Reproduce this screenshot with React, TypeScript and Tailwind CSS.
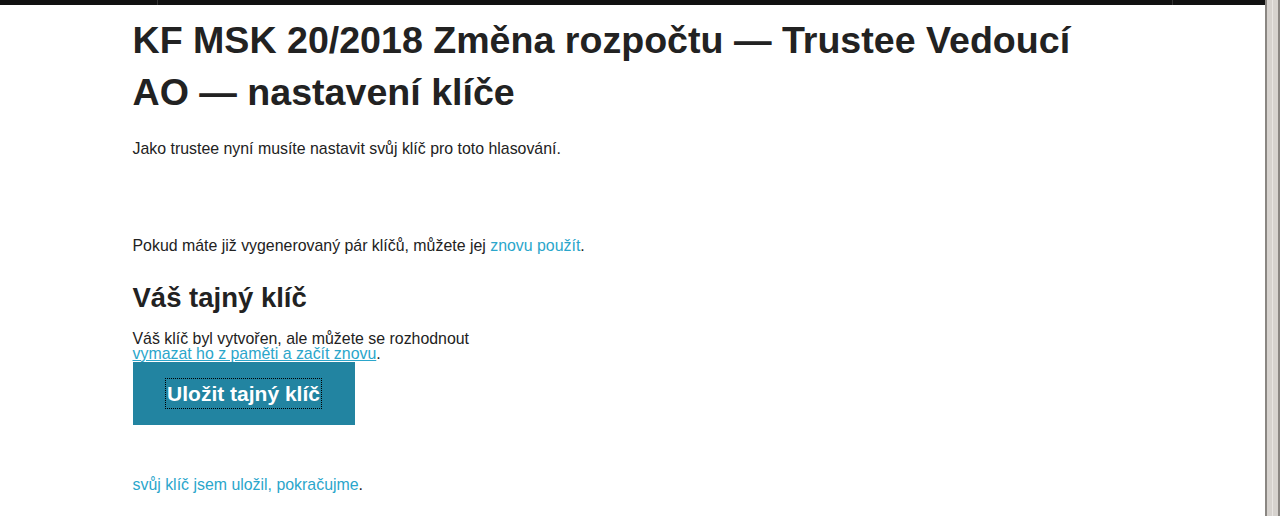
import React from "react";

export default function App() {
  return (
    <div className="flex h-[516px] w-full overflow-hidden bg-white font-['Liberation_Sans',Arial,sans-serif] text-[#222222]">
      <div className="flex min-w-0 flex-1 flex-col">
        <div className="flex h-[5px] w-full bg-[#111111]">
          <div className="w-[158px] border-r border-[#333333]" />
          <div className="w-[1015px] border-r border-[#333333]" />
          <div className="flex-1" />
        </div>
        <div className="mx-auto w-[1000px]">
          <h1 className="mt-[9px] w-[960px] text-[37.6px] font-bold leading-[52px] text-[#222222]">
            KF MSK 20/2018 Změna rozpočtu — Trustee Vedoucí AO — nastavení klíče
          </h1>
          <p className="mt-[19px] text-[15.9px] leading-[24px]">
            Jako trustee nyní musíte nastavit svůj klíč pro toto hlasování.
          </p>
          <p className="mt-[73px] text-[15.9px] leading-[24px]">
            Pokud máte již vygenerovaný pár klíčů, můžete jej{" "}
            <a href="#" className="text-[#2ba6cb]">znovu použít</a>.
          </p>
          <h2 className="mt-[21px] text-[27.5px] font-bold leading-[38px]">Váš tajný klíč</h2>
          <p className="mt-[14px] text-[15.9px] leading-[15px]">
            Váš klíč byl vytvořen, ale můžete se rozhodnout
            <br />
            <a href="#" className="text-[#2ba6cb] underline">vymazat ho z paměti a začít znovu</a>.
          </p>
          <button className="mt-[1px] flex h-[63px] w-[222px] items-center justify-center bg-[#2284a1] text-white">
            <span className="px-[1px] text-[21px] font-bold leading-[29px] outline-1 outline-dotted outline-black">
              Uložit tajný klíč
            </span>
          </button>
          <p className="mt-[48px] text-[15.9px] leading-[24px]">
            <a href="#" className="text-[#2ba6cb]">svůj klíč jsem uložil, pokračujme</a>.
          </p>
        </div>
      </div>
      <div className="flex h-full w-[15px] border-x-2 border-[#8a8682] bg-[#d6d2ce]">
        <div className="mx-auto h-full w-[1px] bg-[#e8e5e2]" />
      </div>
    </div>
  );
}
